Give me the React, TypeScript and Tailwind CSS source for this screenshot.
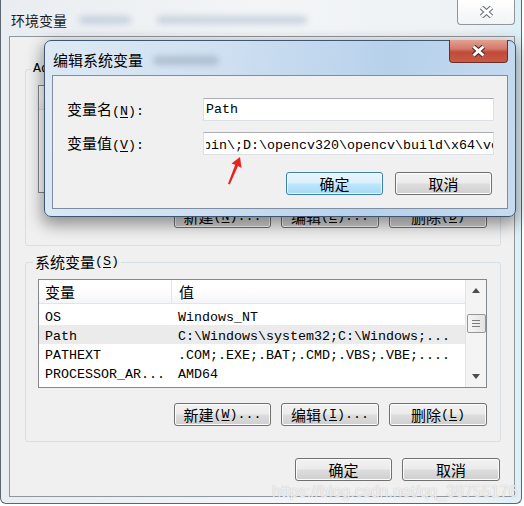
import React from "react";

type Kids = { children?: React.ReactNode };

// ascii glyphs are fixed width in these dialogs
function M({ children }: Kids) {
  return <span className="font-['Liberation_Mono',monospace] text-[13.33px] leading-none">{children}</span>;
}

function Key({ k }: { k: string }) {
  return <span className="underline underline-offset-[2px]">{k}</span>;
}

function Btn({ children, w, primary }: Kids & { w: string; primary?: boolean }) {
  const skin = primary
    ? "border-[#3c7fb1] bg-[linear-gradient(to_bottom,#eaf6fd_0%,#d9f0fc_48%,#bee6fd_52%,#a7d9f5_100%)] shadow-[inset_0_0_0_1px_rgba(255,255,255,0.75)]"
    : "border-[#707070] bg-[linear-gradient(to_bottom,#f2f2f2_0%,#ebebeb_48%,#dddddd_52%,#cfcfcf_100%)] shadow-[inset_0_0_0_1px_#fcfcfc]";
  return (
    <div className={`flex h-[23px] shrink-0 items-center justify-center rounded-[3px] border leading-[18px] ${skin} ${w}`}>
      {children}
    </div>
  );
}

function CloseX({ edge }: { edge: string }) {
  return (
    <svg width="17" height="12" viewBox="0 0 17 12">
      <path d="M3.5 1.5 L13.5 10.5 M13.5 1.5 L3.5 10.5" stroke={edge} strokeWidth="5" />
      <path d="M3.5 1.5 L13.5 10.5 M13.5 1.5 L3.5 10.5" stroke="#ffffff" strokeWidth="3" />
    </svg>
  );
}

function ScrollBar() {
  return (
    <div className="flex w-[21px] shrink-0 flex-col items-center border-l border-[#e3e3e3] bg-[#f4f4f4]">
      <div className="flex h-[21px] items-center justify-center">
        <svg width="8" height="5" viewBox="0 0 8 5">
          <path d="M0 5 L4 0 L8 5 Z" fill="#4d4d4d" />
        </svg>
      </div>
      <div className="mt-[13px] flex h-[19px] w-[19px] flex-col items-center justify-center gap-[2px] rounded-[2px] border border-[#979797] bg-[linear-gradient(to_right,#f6f6f6,#e3e3e3)]">
        <div className="h-px w-[8px] bg-[#7c7c7c]" />
        <div className="h-px w-[8px] bg-[#7c7c7c]" />
        <div className="h-px w-[8px] bg-[#7c7c7c]" />
      </div>
      <div className="flex-1" />
      <div className="flex h-[21px] items-center justify-center">
        <svg width="8" height="5" viewBox="0 0 8 5">
          <path d="M0 0 L8 0 L4 5 Z" fill="#4d4d4d" />
        </svg>
      </div>
    </div>
  );
}

function ListBox({ rows, hl, h }: { rows: [string, string][]; hl?: number; h: string }) {
  return (
    <div className={`flex border border-[#828790] bg-white ${h}`}>
      <div className="flex min-w-0 flex-1 flex-col overflow-hidden">
        <div className="flex h-[24px] shrink-0 items-center border-b border-[#e2e4e7] bg-[linear-gradient(to_bottom,#ffffff_0%,#ffffff_45%,#f3f4f6_100%)] leading-[18px]">
          <div className="flex h-full w-[133px] items-center border-r border-[#e3e5e8] pl-[6px]">变量</div>
          <div className="pl-[7px]">值</div>
        </div>
        <div className="pt-[2px]">
          {rows.map(([a, b], i) => (
            <div key={i} className={`flex h-[19px] items-center whitespace-nowrap ${i === hl ? "bg-[#ebebeb]" : ""}`}>
              <div className="w-[133px] pl-[6px]"><M>{a}</M></div>
              <div className="pl-[6px]"><M>{b}</M></div>
            </div>
          ))}
        </div>
      </div>
      <ScrollBar />
    </div>
  );
}

export default function App() {
  const userRows: [string, string][] = [
    ["TEMP", "%USERPROFILE%\\AppData\\Local\\Temp"],
    ["TMP", "%USERPROFILE%\\AppData\\Local\\Temp"],
  ];
  const sysRows: [string, string][] = [
    ["OS", "Windows_NT"],
    ["Path", "C:\\Windows\\system32;C:\\Windows;..."],
    ["PATHEXT", ".COM;.EXE;.BAT;.CMD;.VBS;.VBE;...."],
    ["PROCESSOR_AR...", "AMD64"],
  ];

  return (
    <div className="relative h-[506px] w-[524px] overflow-hidden bg-white font-['Noto_Sans_CJK_SC',sans-serif] text-[15px] text-black">
      {/* outer window: 环境变量 */}
      <div className="flex h-[504px] w-[522px] flex-col rounded-bl-[6px] rounded-br-[6px] border-b border-l border-r border-[#5d656e] bg-[linear-gradient(to_right,#e9edf1_0%,#f3f5f7_50%,#eef2f5_90%,#dcf0f7_100%)] pb-[6px] pl-[8px] pr-[6px]">
        <div className="flex h-[36px] shrink-0 items-start justify-between">
          <div className="ml-[2px] mt-[11px] flex items-center leading-[18px]">
            <span className="text-[14px] text-[#1e1e1e]">环境变量</span>
            <span className="ml-[12px] h-[8px] w-[52px] rounded-full bg-[#8aa2bd] opacity-40 blur-[3px]" />
            <span className="ml-[26px] h-[8px] w-[150px] rounded-full bg-[#8aa2bd] opacity-40 blur-[3px]" />
          </div>
          <div className="flex h-[25px] w-[58px] items-center justify-center rounded-b-[4px] border border-t-0 border-[#8e959c] bg-[linear-gradient(to_bottom,#ffffff,#f1f3f5)]">
            <CloseX edge="#6a6f75" />
          </div>
        </div>

        <div className="flex flex-1 flex-col border border-[#8f979e] bg-[#f0f0f0] pl-[15px] pr-[13px] pt-[23px]">
          <fieldset className="rounded-[3px] border border-[#d5dfe5] pb-[17px] pl-[12px] pr-[13px]">
            <legend className="ml-[-7px] flex h-[18px] items-center px-[2px] leading-[18px]">
              <M>Administrator </M>的用户变量<M>(<Key k="U" />)</M>
            </legend>
            <div className="mt-[7px]">
              <ListBox rows={userRows} h="h-[108px]" />
            </div>
            <div className="mt-[12px] flex justify-end gap-[10px]">
              <Btn w="w-[97px]">新建<M>(<Key k="N" />)...</M></Btn>
              <Btn w="w-[98px]">编辑<M>(<Key k="E" />)...</M></Btn>
              <Btn w="w-[98px]">删除<M>(<Key k="D" />)</M></Btn>
            </div>
          </fieldset>

          <fieldset className="mt-[7px] rounded-[3px] border border-[#d5dfe5] pb-[15px] pl-[12px] pr-[13px]">
            <legend className="ml-[-5px] flex h-[18px] items-center px-[2px] leading-[18px]">
              系统变量<M>(<Key k="S" />)</M>
            </legend>
            <div className="mt-[8px]">
              <ListBox rows={sysRows} hl={1} h="h-[109px]" />
            </div>
            <div className="mt-[15px] flex justify-end gap-[10px]">
              <Btn w="w-[97px]">新建<M>(<Key k="W" />)...</M></Btn>
              <Btn w="w-[98px]">编辑<M>(<Key k="I" />)...</M></Btn>
              <Btn w="w-[98px]">删除<M>(<Key k="L" />)</M></Btn>
            </div>
          </fieldset>

          <div className="mr-[1px] mt-[16px] flex justify-end gap-[10px]">
            <Btn w="w-[97px]">确定</Btn>
            <Btn w="w-[98px]">取消</Btn>
          </div>
        </div>
      </div>

      {/* modal: 编辑系统变量 */}
      <div className="absolute left-[44px] top-[40px] flex w-[472px] flex-col rounded-[7px] border border-[#3f5670] bg-[linear-gradient(100deg,#dde9f5_0%,#cfe0f1_35%,#b7d1eb_70%,#c6dbef_100%)] px-[7px] pb-[7px] shadow-[0_6px_16px_2px_rgba(0,0,0,0.4)]">
        <div className="flex h-[34px] shrink-0 items-start justify-between">
          <div className="ml-[1px] mt-[10px] flex items-center leading-[18px]">
            <span>编辑系统变量</span>
            <span className="ml-[10px] h-[9px] w-[66px] rounded-full bg-[#6d7f94] opacity-35 blur-[3px]" />
          </div>
          <div className="-mt-px flex h-[23px] w-[59px] items-center justify-center rounded-b-[4px] border border-t-0 border-[#6b2f2a] bg-[linear-gradient(to_bottom,#e4a092_0%,#d47a6a_40%,#c24a38_55%,#c75a46_100%)]">
            <CloseX edge="#4a2a28" />
          </div>
        </div>

        <div className="border border-[#7e8ea2] bg-[#f0f0f0] pb-[13px] pl-[14px] pr-[13px] pt-[22px]">
          <div className="grid grid-cols-[136px_minmax(0,1fr)] items-center gap-y-[11px] leading-[18px]">
            <div>变量名<M>(<Key k="N" />):</M></div>
            <div className="flex h-[23px] min-w-0 items-center border border-[#dbdfe6] border-t-[#abadb3] bg-white pl-[2px]">
              <M>Path</M>
            </div>
            <div>变量值<M>(<Key k="V" />):</M></div>
            <div className="flex h-[23px] min-w-0 items-center overflow-hidden border border-[#dbdfe6] border-t-[#abadb3] bg-white pl-[2px]">
              <div className="min-w-0 flex-1 overflow-hidden whitespace-nowrap">
                <div className="ml-[-3px]">
                  <M>bin\;D:\opencv320\opencv\build\x64\vc14\bin</M>
                </div>
              </div>
            </div>
          </div>
          <div className="mr-[2px] mt-[17px] flex justify-end gap-[12px]">
            <Btn w="w-[97px]" primary>确定</Btn>
            <Btn w="w-[97px]">取消</Btn>
          </div>
        </div>
      </div>

      {/* red annotation arrow */}
      <svg className="pointer-events-none absolute left-0 top-0" width="524" height="506" viewBox="0 0 524 506">
        <polygon
          points="240,157 241.5,168 238,166 229.8,184.5 228,183.8 235.2,164.7 231.5,163.5"
          fill="#e8231e"
        />
      </svg>

      {/* watermark */}
      <div className="pointer-events-none absolute left-[272px] top-[483px] font-['Liberation_Sans',sans-serif] text-[16px] leading-[18px] text-white/80 [text-shadow:0_0_1px_rgba(120,120,120,0.6)]">
        https://blog.csdn.net/qq_38755176
      </div>
    </div>
  );
}
